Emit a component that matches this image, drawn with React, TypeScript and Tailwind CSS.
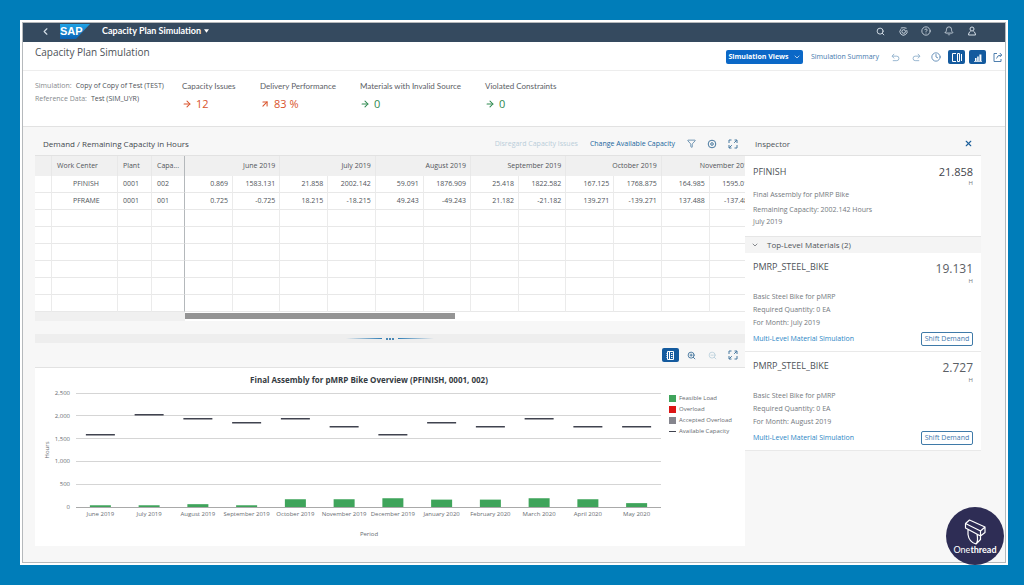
import type { ReactNode } from "react";
import {
  ArrowRight,
  ArrowUpRight,
  Bell,
  ChevronDown,
  ChevronLeft,
  CircleHelp,
  Clock,
  Filter,
  Search,
  X,
  ZoomIn,
  ZoomOut,
} from "lucide-react";

const months = ["June 2019", "July 2019", "August 2019", "September 2019", "October 2019", "November 2019"];

const rows = [
  {
    center: "PFINISH",
    plant: "0001",
    capacity: "002",
    values: ["0.869", "1583.131", "21.858", "2002.142", "59.091", "1876.909", "25.418", "1822.582", "167.125", "1768.875", "164.985", "1595.015"],
  },
  {
    center: "PFRAME",
    plant: "0001",
    capacity: "001",
    values: ["0.725", "-0.725", "18.215", "-18.215", "49.243", "-49.243", "21.182", "-21.182", "139.271", "-139.271", "137.488", "-137.488"],
  },
];

const periods = [
  { label: "June 2019", load: 38, capacity: 1575 },
  { label: "July 2019", load: 38, capacity: 2020 },
  { label: "August 2019", load: 62, capacity: 1930 },
  { label: "September 2019", load: 38, capacity: 1840 },
  { label: "October 2019", load: 170, capacity: 1930 },
  { label: "November 2019", load: 170, capacity: 1745 },
  { label: "December 2019", load: 192, capacity: 1575 },
  { label: "January 2020", load: 162, capacity: 1840 },
  { label: "February 2020", load: 162, capacity: 1745 },
  { label: "March 2020", load: 192, capacity: 1930 },
  { label: "April 2020", load: 170, capacity: 1745 },
  { label: "May 2020", load: 85, capacity: 1745 },
];

const materials = [
  { name: "PMRP_STEEL_BIKE", hours: "19.131", month: "July 2019" },
  { name: "PMRP_STEEL_BIKE", hours: "2.727", month: "August 2019" },
];

function IconButton({ label, className = "", children }: { label: string; className?: string; children: ReactNode }) {
  return (
    <button type="button" aria-label={label} className={`flex h-[14px] items-center justify-center rounded-xs ${className}`}>
      {children}
    </button>
  );
}

function SapLogo() {
  return (
    <svg viewBox="0 0 30 15" className="h-[15px] w-[30px]" role="img" aria-label="SAP">
      <defs>
        <linearGradient id="sap" x1="0" y1="0" x2="0" y2="1">
          <stop offset="0" stopColor="#1fa3e6" />
          <stop offset="1" stopColor="#0a62b4" />
        </linearGradient>
      </defs>
      <path d="M0 0H30L16 15H0Z" fill="url(#sap)" />
      <text x="0" y="11" fontSize="11" fontWeight="900" fill="#fff" fontFamily="Liberation Sans, sans-serif">
        SAP
      </text>
    </svg>
  );
}

function ExpandIcon() {
  return (
    <svg viewBox="0 0 10 10" className="size-[10px]" fill="none" stroke="currentColor">
      <path d="M1 4V1h2.500M6.500 1H9v3M9 6v3H6.500M3.500 9H1V6M6.200 3.800 8.800 1.200M3.800 6.200 1.200 8.800" />
    </svg>
  );
}

function ShellBar() {
  return (
    <header className="flex h-[19px] items-center bg-[#354a5f] pr-[27px] pb-[3px] pl-4 text-[#d5dfe8]">
      <IconButton label="Back" className="w-3">
        <ChevronLeft size={11} strokeWidth={2.500} />
      </IconButton>
      <div className="ml-[9px] flex items-center">
        <SapLogo />
      </div>
      <button type="button" className="ml-[12px] flex items-center gap-[3px] font-[Lato,sans-serif] text-[9px] leading-3 font-bold text-white">
        Capacity Plan Simulation
        <svg viewBox="0 0 6 4" className="h-1 w-[5px]" fill="currentColor">
          <path d="M0 0h6L3 4z" />
        </svg>
      </button>
      <div className="ml-auto flex items-center gap-[11px]">
        <IconButton label="Search" className="w-3"><Search size={9} strokeWidth={2.500} /></IconButton>
        <IconButton label="CoPilot" className="w-3">
          <svg viewBox="0 0 10 10" className="size-[9px]" fill="none" stroke="currentColor">
            <path d="M2 2.500A4 4 0 1 0 8.600 3.400M2 1.200Q5 .2 8.400 1.400" />
            <circle cx="5.200" cy="5" r="2" />
          </svg>
        </IconButton>
        <IconButton label="Help" className="w-3"><CircleHelp size={10} /></IconButton>
        <IconButton label="Notifications" className="w-3"><Bell size={10} /></IconButton>
        <IconButton label="User" className="w-3">
          <svg viewBox="0 0 10 10" className="size-[10px]" fill="none" stroke="currentColor">
            <circle cx="5" cy="3" r="2" />
            <path d="M3.500 5.500Q1.500 6 1.500 9h7Q8.500 6 6.500 5.500" />
          </svg>
        </IconButton>
      </div>
    </header>
  );
}

function PageHeader() {
  return (
    <div className="flex h-[29px] items-start justify-between border-b border-[#ededed] bg-white pl-3">
      <h1 className="pt-[3px] text-[10px] leading-[14px] text-[#4d5257]">Capacity Plan Simulation</h1>
      <div className="flex items-center pt-2 text-[#4f7fae]">
        <button type="button" className="flex h-[14px] w-[77px] items-center justify-center gap-1 rounded-xs bg-[#0b68c7] text-[7px] font-bold whitespace-nowrap text-white">
          Simulation Views
          <ChevronDown size={8} />
        </button>
        <button type="button" className="ml-2 w-[68px] text-left text-[7px] leading-3 whitespace-nowrap text-[#3f79ae]">Simulation Summary</button>
        <IconButton label="Undo" className="ml-2 w-4 text-[#8fb0cc]">
          <svg viewBox="0 0 10 10" className="size-[9px]" fill="none" stroke="currentColor">
            <path d="M3.500 1 1.200 3.500 3.500 6M1.200 3.500H6.500Q8.800 3.500 8.800 6T6.500 8.500H2" />
          </svg>
        </IconButton>
        <IconButton label="Redo" className="ml-[5px] w-4 text-[#8fb0cc]">
          <svg viewBox="0 0 10 10" className="size-[9px]" fill="none" stroke="currentColor">
            <path d="M6.500 1 8.800 3.500 6.500 6M8.800 3.500H3.500Q1.200 3.500 1.200 6T3.500 8.500H8" />
          </svg>
        </IconButton>
        <IconButton label="History" className="ml-1 w-4"><Clock size={10} strokeWidth={2} /></IconButton>
        <IconButton label="Toggle inspector" className="ml-1 w-[17px] bg-[#145a9e] text-white">
          <svg viewBox="0 0 10 9" className="h-[9px] w-[10px]" fill="none" stroke="currentColor">
            <path d="M4 .5H.5v8H4M5.500 .5h2v8h-2zM9.500 1v7" />
          </svg>
        </IconButton>
        <IconButton label="Toggle chart" className="ml-1 w-[17px] bg-[#145a9e] text-white">
          <svg viewBox="0 0 10 9" className="h-[9px] w-[10px]" fill="currentColor">
            <path d="M2 5h1.500v3H2zM4.200 3.500h1.500V8H4.200zM6.400 1.500h2V8h-2zM1 8.300h8V9H1z" />
          </svg>
        </IconButton>
        <IconButton label="Share" className="ml-1 w-[15px]">
          <svg viewBox="0 0 10 10" className="size-[10px]" fill="none" stroke="currentColor">
            <path d="M4 1.500H1v8h7V7M3.500 6.500Q4 3 8.500 3M6.800 1l2 2-2 2" />
          </svg>
        </IconButton>
      </div>
    </div>
  );
}

function Kpi({ label, value, tone, up }: { label: string; value: string; tone: string; up?: boolean }) {
  const Icon = up ? ArrowUpRight : ArrowRight;
  return (
    <div>
      <div className="font-[Lato,sans-serif] text-[8px] leading-3 whitespace-nowrap text-[#5b6065]">{label}</div>
      <div className={`mt-[5px] flex items-center gap-1 text-[11px] leading-[14px] font-medium ${tone}`}>
        <Icon size={10} strokeWidth={2.500} />
        {value}
      </div>
    </div>
  );
}

function Summary() {
  return (
    <section className="grid h-14 grid-cols-[147px_78px_100px_125px_1fr] border-b border-[#e2e2e2] bg-white pt-[9px] pl-3">
      <dl className="grid auto-rows-[13px] content-start text-[7px] leading-3 text-[#4d5257]">
        <div className="flex gap-1">
          <dt className="text-[#85898d]">Simulation:</dt>
          <dd>Copy of Copy of Test (TEST)</dd>
        </div>
        <div className="flex gap-1">
          <dt className="text-[#85898d]">Reference Data:</dt>
          <dd>Test (SIM_UYR)</dd>
        </div>
      </dl>
      <Kpi label="Capacity Issues" value="12" tone="text-[#d9532b]" />
      <Kpi label="Delivery Performance" value="83 %" tone="text-[#d9532b]" up />
      <Kpi label="Materials with Invalid Source" value="0" tone="text-[#2f8a50]" />
      <Kpi label="Violated Constraints" value="0" tone="text-[#2f8a50]" />
    </section>
  );
}

function CapacityTable() {
  return (
    <section>
      <div className="flex h-[29px] items-center border-b border-[#e2e2e2] pt-[5px] pl-2 text-[#47789f]">
        <h2 className="text-[8px] leading-3 text-[#43484d]">Demand / Remaining Capacity in Hours</h2>
        <div className="ml-auto flex items-center">
          <button type="button" disabled className="text-[7px] leading-3 text-[#b9cdd9]">Disregard Capacity Issues</button>
          <button type="button" className="ml-3 text-[7px] leading-3 text-[#20659c]">Change Available Capacity</button>
          <IconButton label="Filter" className="ml-2 w-4"><Filter size={9} /></IconButton>
          <IconButton label="Settings" className="ml-[5px] w-4">
            <svg viewBox="0 0 10 10" className="size-[10px]" fill="none" stroke="currentColor">
              <circle cx="5" cy="5" r="3.800" />
              <circle cx="5" cy="5" r="1.300" />
            </svg>
          </IconButton>
          <IconButton label="Full screen" className="mr-1 ml-[5px] w-4"><ExpandIcon /></IconButton>
        </div>
      </div>
      <div className="overflow-hidden bg-white">
        <table className="w-[722px] table-fixed border-separate border-spacing-0 text-[7px] leading-3 text-[#50555a]">
          <colgroup>
            <col className="w-[17px]" />
            <col className="w-[66px]" />
            <col className="w-[34px]" />
            <col className="w-[33px]" />
            {months.map((month) => [
              <col key={month} className="w-[48px]" />,
              <col key={`${month} remaining`} />,
            ])}
          </colgroup>
          <thead className="bg-[#f0f0f0]">
            <tr className="h-5 *:border-r *:border-r-[#e8e8e8] *:p-0 *:font-normal">
              <th aria-label="Selection" />
              <th className="text-left"><span className="pl-[5px]">Work Center</span></th>
              <th className="text-left"><span className="pl-[5px]">Plant</span></th>
              <th className="border-r-[#b4b8bb]! text-left"><span className="pl-[5px]">Capa...</span></th>
              {months.map((month) => (
                <th key={month} colSpan={2} className="text-right"><span className="pr-[4px]">{month}</span></th>
              ))}
            </tr>
          </thead>
          <tbody>
            {Array.from({ length: 8 }, (_, i) => {
              const row = rows[i];
              return (
                <tr key={i} className="h-[17px] *:border-r *:border-b *:border-r-[#ebebeb] *:border-b-[#e8e8e8] *:p-0">
                  <td />
                  <td><span className="pl-[21px]">{row?.center}</span></td>
                  <td><span className="pl-[5px]">{row?.plant}</span></td>
                  <td className="border-r-[#b4b8bb]!"><span className="pl-[5px]">{row?.capacity}</span></td>
                  {Array.from({ length: 12 }, (_, j) => (
                    <td key={j} className="text-right"><span className="pr-[4px]">{row?.values[j]}</span></td>
                  ))}
                </tr>
              );
            })}
          </tbody>
        </table>
      </div>
      <div className="flex h-[9px] items-start bg-white">
        <div className="h-full w-[150px] bg-[#f0f0f0]" />
        <div className="mt-px h-[6px] w-[270px] bg-[#949494]" />
      </div>
    </section>
  );
}

function Splitter() {
  return (
    <div className="mt-[13px] flex h-[9px] items-center justify-center gap-1 bg-[#eeeeee]">
      <div className="h-px w-9 bg-linear-to-r from-transparent to-[#2f7db5]" />
      <div className="flex gap-px">
        <i className="size-[2px] bg-[#4a88b5]" />
        <i className="size-[2px] bg-[#4a88b5]" />
        <i className="size-[2px] bg-[#4a88b5]" />
      </div>
      <div className="h-px w-9 bg-linear-to-l from-transparent to-[#2f7db5]" />
    </div>
  );
}

const plot = { left: 41, right: 626, top: 25, bottom: 139 };
const toY = (hours: number) => plot.bottom - (hours / 2500) * (plot.bottom - plot.top);
const toX = (index: number) => plot.left + ((plot.right - plot.left) / periods.length) * (index + 0.5);

function Chart() {
  return (
    <section>
      <div className="flex h-[25px] items-center justify-end border-b border-[#e2e2e2] text-[#47789f]">
        <IconButton label="Toggle legend" className="w-[17px] bg-[#145a9e] text-white">
          <svg viewBox="0 0 9 9" className="size-[9px]" fill="none" stroke="currentColor">
            <path d="M1.500 .5h6v8h-6zM3.500 .5v8M.5 2.500h1M.5 4.500h1M.5 6.500h1M5 2.500h1.500M5 4.500h1.500M5 6.500h1.500" />
          </svg>
        </IconButton>
        <IconButton label="Zoom in" className="ml-1 w-4"><ZoomIn size={9} strokeWidth={2.500} /></IconButton>
        <IconButton label="Zoom out" className="ml-[5px] w-4 text-[#b3cbd8]"><ZoomOut size={9} /></IconButton>
        <IconButton label="Full screen" className="mr-1 ml-[5px] w-4"><ExpandIcon /></IconButton>
      </div>
      <div className="flex items-start bg-white">
        <svg viewBox="0 0 628 178" className="min-w-0 flex-1" fontSize="6" fill="#676c71" role="img" aria-label="Overview of load and capacity">
          <text x="334" y="15" fontSize="8" fontWeight="700" fill="#353b42" textAnchor="middle">
            Final Assembly for pMRP Bike Overview (PFINISH, 0001, 002)
          </text>
          {[2500, 2000, 1500, 1000, 500, 0].map((hours) => (
            <g key={hours}>
              <path d={`M${plot.left} ${Math.floor(toY(hours)) + 0.5}H${plot.right}`} stroke={hours ? "#d5d5d5" : "#a9a9a9"} />
              <text x="35" y={toY(hours) + 2} textAnchor="end">{hours.toLocaleString("en-US")}</text>
            </g>
          ))}
          {periods.map((period, i) => (
            <g key={period.label}>
              <rect x={toX(i) - 10.500} y={toY(period.load)} width="21" height={plot.bottom - toY(period.load)} fill="#3fa45b" />
              <rect x={toX(i) - 14.500} y={Math.round(toY(period.capacity)) - 1} width="29" height="1.500" fill="#40434f" />
              <text x={toX(i)} y="148" textAnchor="middle">{period.label}</text>
            </g>
          ))}
          <text x="334" y="168" textAnchor="middle">Period</text>
          <text transform="translate(14 82) rotate(-90)" textAnchor="middle">Hours</text>
        </svg>
        <ul className="w-[82px] shrink-0 pt-[25px] pl-[6px] text-[6px] leading-[11px] whitespace-nowrap text-[#676c71]">
          <li className="flex items-center gap-[3px]"><i className="size-[7px] bg-[#3fa45b]" />Feasible Load</li>
          <li className="flex items-center gap-[3px]"><i className="size-[7px] bg-[#dc1414]" />Overload</li>
          <li className="flex items-center gap-[3px]"><i className="size-[7px] bg-[#85858d]" />Accepted Overload</li>
          <li className="flex items-center gap-[3px]"><i className="h-px w-[7px] bg-[#40434f]" />Available Capacity</li>
        </ul>
      </div>
    </section>
  );
}

function Inspector() {
  return (
    <aside className="w-[236px] shrink-0 text-[7px] text-[#74797e]">
      <div className="flex h-[29px] items-center justify-between border-b border-[#e2e2e2] pt-[5px] pr-[5px] pl-[10px]">
        <h2 className="text-[8px] leading-3 text-[#50555a]">Inspector</h2>
        <IconButton label="Close inspector" className="w-4 text-[#1d5f9b]"><X size={9} strokeWidth={3} /></IconButton>
      </div>
      <div className="bg-white px-2 pt-[9px] pb-2">
        <div className="flex justify-between">
          <h3 className="text-[9px] leading-[13px] text-[#4d5257]">PFINISH</h3>
          <div className="text-right">
            <div className="text-[11px] leading-[13px] text-[#3f444a]">21.858</div>
            <div className="text-[6px] leading-[10px]">H</div>
          </div>
        </div>
        <p className="mt-px leading-3">Final Assembly for pMRP Bike</p>
        <p className="mt-[3px] leading-3">Remaining Capacity: 2002.142 Hours</p>
        <p className="leading-3">July 2019</p>
      </div>
      <button type="button" className="flex h-[17px] w-full items-center gap-2 border-t border-[#e6e6e6] bg-[#f4f4f4] pl-[6px] text-[8px] leading-3 text-[#50555a]">
        <ChevronDown size={8} />
        Top-Level Materials (2)
      </button>
      {materials.map((item) => (
        <article key={item.month} className="border-b border-[#e9e9e9] bg-white px-2 pt-[7px] pb-[5px]">
          <div className="flex justify-between">
            <h3 className="text-[9px] leading-[13px] text-[#4d5257]">{item.name}</h3>
            <div className="pt-[2px] text-right">
              <div className="text-[12px] leading-[14px] text-[#5b6065]">{item.hours}</div>
              <div className="text-[6px] leading-[10px]">H</div>
            </div>
          </div>
          <div className="mt-1 leading-[13px]">
            <p>Basic Steel Bike for pMRP</p>
            <p>Required Quantity: 0 EA</p>
            <p>For Month: {item.month}</p>
          </div>
          <div className="mt-[3px] flex items-center justify-between">
            <a href="#simulation" className="leading-3 text-[#2b86c5]">Multi-Level Material Simulation</a>
            <button type="button" className="h-[14px] w-[52px] rounded-xs border border-[#3f7aa8] text-[7px] leading-3 whitespace-nowrap text-[#3f79ae]">Shift Demand</button>
          </div>
        </article>
      ))}
    </aside>
  );
}

function OnethreadBadge() {
  return (
    <div className="absolute right-5 bottom-5 flex size-[58px] flex-col items-center rounded-full bg-[#2e2d55] pt-3 text-white">
      <svg viewBox="0 0 24 26" className="h-[26px] w-6" fill="none" stroke="currentColor" strokeWidth="1.200" strokeLinejoin="round">
        <path d="M2.500 4.500 6.500 1 22 8l-4.500 4zM2.500 4.500v4.500L17.500 17v-5M22 8v5.500L17.500 17M5 10.500v5q1 7.500 8 9.500l4.500-4.500V17M13 25q2.500-3 1-9.800" />
      </svg>
      <div className="font-[Lato,sans-serif] text-[9px] leading-[10px]">One<b>thread</b></div>
    </div>
  );
}

export default function App() {
  return (
    <div className="relative flex min-h-screen flex-col bg-[#007db9] py-5 pr-4 pl-5 font-['Open_Sans',sans-serif]">
      <div className="flex flex-1 flex-col border-2 border-white">
        <div className="flex flex-1 flex-col border border-[#b5b9bc] bg-[#f7f7f7]">
          <ShellBar />
          <PageHeader />
          <Summary />
          <div className="flex pr-6 pb-4 pl-3">
            <main className="min-w-0 flex-1">
              <CapacityTable />
              <Splitter />
              <Chart />
            </main>
            <Inspector />
          </div>
        </div>
      </div>
      <OnethreadBadge />
    </div>
  );
}
